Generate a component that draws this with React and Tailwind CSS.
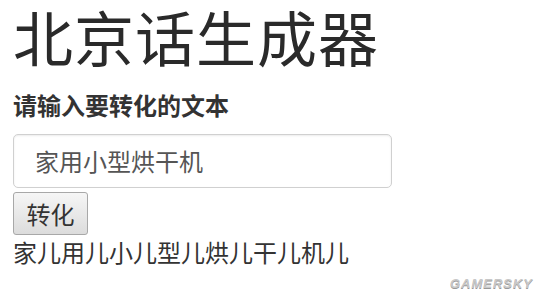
export default function App() {
  const cjk = { fontFamily: '"Noto Sans CJK SC", "Noto Sans", sans-serif' };
  return (
    <div className="relative w-[540px] h-[298px] bg-white overflow-hidden text-[#333]" style={cjk}>
      <div className="flex flex-col items-start pl-[13px]">
        <h1 className="mt-0 text-[60px] leading-[72px] font-normal tracking-[1px] text-[#2a2a2a] whitespace-nowrap">北京话生成器</h1>
        <div className="mt-[18px] text-[24px] leading-[30px] font-bold text-[#333]">请输入要转化的文本</div>
        <div className="mt-[14px] w-[379px] h-[54px] rounded-[5px] border border-[#d0d0d0] shadow-[inset_0_1px_2px_rgba(0,0,0,0.08)] flex items-center pl-[21px] text-[24px] text-[#555]">
          家用小型烘干机
        </div>
        <button className="mt-[4px] w-[75px] h-[43px] rounded-[3px] border border-[#a8a8a8] bg-gradient-to-b from-[#f6f6f6] to-[#dcdcdc] flex items-center justify-center text-[24px] text-[#333]">
          转化
        </button>
        <div className="mt-[1px] text-[24px] leading-[32px] text-[#333]">家儿用儿小儿型儿烘儿干儿机儿</div>
      </div>
      <div
        className="absolute right-[7px] bottom-[7px] text-[13px] leading-[14px] font-black italic tracking-[1px] text-[#c8c8c8] [text-shadow:0_1px_0_#999]"
        style={{ fontFamily: '"Liberation Sans", Arial, sans-serif' }}
      >
        GAMERSKY
      </div>
    </div>
  );
}
